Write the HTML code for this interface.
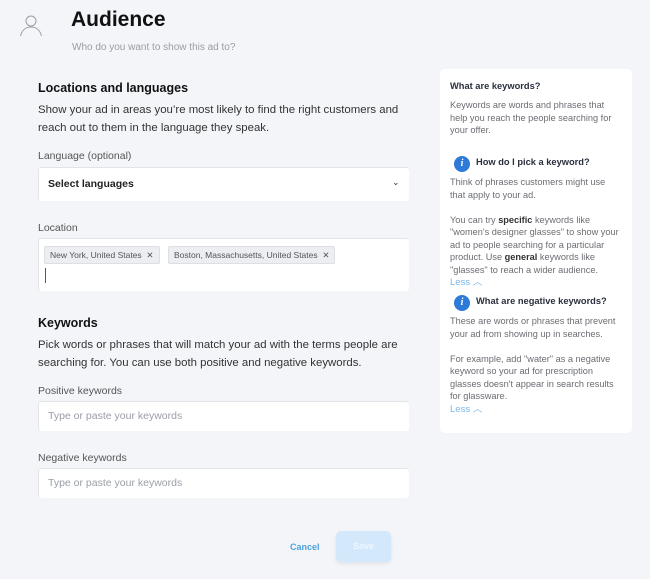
<!DOCTYPE html>
<html><head><style>
body{margin:0;width:650px;height:579px;background:#f3f5f9;font-family:"Liberation Sans",sans-serif;position:relative;overflow:hidden;color:#1d1d1f}
.a{position:absolute}
.h{font-weight:bold;font-size:12.5px;color:#111}
.p{font-size:11.4px;color:#333;line-height:18px}
.l{font-size:10.5px;color:#555}
.box{background:#fff;border-top:1px solid #e2e4e8;border-left:1px solid #e2e4e8;border-radius:3px}
.ph{font-size:10.5px;color:#9a9ea6}
.chip{background:#eceef2;border:1px solid #dcdfe4;border-radius:2px;font-size:8.5px;color:#555;height:16px;line-height:16px;padding:0 5px}
.s{font-size:9.2px;color:#6a6d73;line-height:12.5px}
.sh{font-size:9.3px;font-weight:bold;color:#2a2f3e}
.i{width:16px;height:16px;border-radius:50%;background:#2e7ad8;color:#fff;font-size:10px;font-weight:bold;font-style:italic;text-align:center;line-height:16px;font-family:"Liberation Serif",serif}
.less{font-size:9.5px;color:#7db7e6}
</style></head><body>
<svg class="a" style="left:19px;top:13px" width="24" height="24" viewBox="0 0 24 24" fill="none" stroke="#9a9da3" stroke-width="1"><circle cx="12" cy="8" r="5"/><path d="M1.5 23c1.5-6 5.5-9 10.5-9s9 3 10.5 9"/></svg>
<div class="a" style="left:71px;top:8px;font-size:21px;font-weight:bold;color:#111">Audience</div>
<div class="a" style="left:72px;top:42px;font-size:10px;color:#9a9da3">Who do you want to show this ad to?</div>

<div class="a h" style="left:38px;top:81px">Locations and languages</div>
<div class="a p" style="left:38px;top:101px;width:375px">Show your ad in areas you’re most likely to find the right customers and reach out to them in the language they speak.</div>
<div class="a l" style="left:38px;top:150px">Language (optional)</div>
<div class="a box" style="left:38px;top:167px;width:370px;height:33px"></div>
<div class="a" style="left:48px;top:178px;font-size:10.5px;font-weight:bold;color:#222">Select languages</div>
<div class="a" style="left:392px;top:177px;font-size:9px;color:#333">⌄</div>
<div class="a l" style="left:38px;top:222px">Location</div>
<div class="a box" style="left:38px;top:238px;width:370px;height:52px"></div>
<div class="a chip" style="left:44px;top:246px">New York, United States &nbsp;✕</div>
<div class="a chip" style="left:168px;top:246px">Boston, Massachusetts, United States &nbsp;✕</div>
<div class="a" style="left:45px;top:268px;width:1px;height:15px;background:#555"></div>

<div class="a h" style="left:38px;top:316px">Keywords</div>
<div class="a p" style="left:38px;top:336px;width:375px">Pick words or phrases that will match your ad with the terms people are searching for. You can use both positive and negative keywords.</div>
<div class="a l" style="left:38px;top:385px">Positive keywords</div>
<div class="a box" style="left:38px;top:401px;width:370px;height:29px"></div>
<div class="a ph" style="left:48px;top:410px">Type or paste your keywords</div>
<div class="a l" style="left:38px;top:452px">Negative keywords</div>
<div class="a box" style="left:38px;top:468px;width:370px;height:29px"></div>
<div class="a ph" style="left:48px;top:477px">Type or paste your keywords</div>

<div class="a" style="left:290px;top:542px;font-size:9px;font-weight:bold;color:#4aa3e0">Cancel</div>
<div class="a" style="left:336px;top:531px;width:55px;height:31px;background:#d3e9fb;border-radius:5px;box-shadow:0 2px 4px rgba(0,0,0,.08);color:#eef7ff;font-size:9px;font-weight:bold;text-align:center;line-height:31px">Save</div>

<div class="a" style="left:440px;top:69px;width:192px;height:364px;background:#fff;border-radius:5px"></div>
<div class="a sh" style="left:450px;top:81px">What are keywords?</div>
<div class="a s" style="left:450px;top:99px;width:172px">Keywords are words and phrases that help you reach the people searching for your offer.</div>
<div class="a i" style="left:454px;top:156px">i</div>
<div class="a sh" style="left:476px;top:157px">How do I pick a keyword?</div>
<div class="a s" style="left:450px;top:176px;width:172px">Think of phrases customers might use that apply to your ad.<br><br>You can try <b style="color:#333">specific</b> keywords like "women's designer glasses" to show your ad to people searching for a particular product. Use <b style="color:#333">general</b> keywords like "glasses" to reach a wider audience.</div>
<div class="a less" style="left:450px;top:274px">Less ︿</div>
<div class="a i" style="left:454px;top:295px">i</div>
<div class="a sh" style="left:476px;top:296px">What are negative keywords?</div>
<div class="a s" style="left:450px;top:315px;width:176px">These are words or phrases that prevent your ad from showing up in searches.<br><br>For example, add "water" as a negative keyword so your ad for prescription glasses doesn't appear in search results for glassware.</div>
<div class="a less" style="left:450px;top:401px">Less ︿</div>
</body></html>
